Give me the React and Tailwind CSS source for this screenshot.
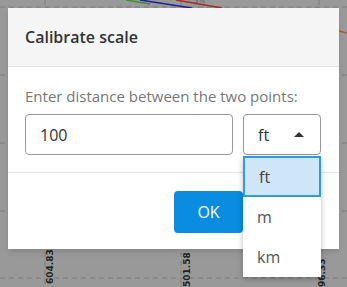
import React from 'react';

const FONT = { fontFamily: '"Open Sans", "Noto Sans", sans-serif' };

const ChartBackdrop = () => (
    <svg className="absolute inset-0" width="347" height="287" viewBox="0 0 347 287">
        {/* grid */}
        {[7, 75, 143, 211, 278].map((y) => (
            <line key={y} x1="0" y1={y} x2="347" y2={y} stroke="#7d7d7d" strokeWidth="1" strokeDasharray="5 4" />
        ))}
        {[45, 181, 319].map((x) => (
            <line key={x} x1={x} y1="0" x2={x} y2="287" stroke="#7d7d7d" strokeWidth="1" strokeDasharray="5 4" />
        ))}
        {/* series */}
        <path d="M126 0 L150 4" stroke="#3f8f3f" strokeWidth="1.5" fill="none" />
        <path d="M140 0 L192 8" stroke="#22229a" strokeWidth="1.5" fill="none" />
        <path d="M176 0 L222 8" stroke="#a82a2a" strokeWidth="1.5" fill="none" />
        <text x="194" y="3" fontSize="7" fill="#555" fontFamily="DejaVu Sans, sans-serif">3%</text>
        <path d="M339 31 L347 33" stroke="#b3562a" strokeWidth="1.5" fill="none" />
        {/* axis labels */}
        <text transform="translate(53 287) rotate(-90)" x="3" y="0" fontSize="9" fontWeight="bold" fill="#222" fontFamily="DejaVu Sans, sans-serif">604.83</text>
        <text transform="translate(190 290) rotate(-90)" x="3" y="0" fontSize="9" fontWeight="bold" fill="#222" fontFamily="DejaVu Sans, sans-serif">501.58</text>
        <text transform="translate(325 290) rotate(-90)" x="3" y="0" fontSize="9" fontWeight="bold" fill="#222" fontFamily="DejaVu Sans, sans-serif">96.33</text>
    </svg>
);

export default function App() {
    return (
        <div className="relative w-[347px] h-[287px] overflow-hidden bg-[#999999]" style={FONT}>
            <ChartBackdrop />

            {/* Dialog */}
            <div className="absolute left-[8px] top-[8px] w-[331px] bg-white shadow-md">
                <div className="h-[59px] flex items-center px-[17px] bg-[#f5f5f5] border-b border-[#e2e2e2]">
                    <h2 className="text-[16px] font-semibold text-[#333]">Calibrate scale</h2>
                </div>

                <div className="px-[17px] pt-[19px] pb-[17px] border-b border-[#e2e2e2]">
                    <p className="text-[15px] leading-[20px] text-[#777]">Enter distance between the two points:</p>
                    <div className="mt-[8px] flex gap-[10px]">
                        <div className="w-[208px] h-[41px] flex items-center px-[14px] border border-[#9a9a9a] rounded-[4px] text-[16px] text-[#333]">
                            100
                        </div>
                        <div className="w-[78px] h-[41px] flex items-center justify-between pl-[14px] pr-[16px] border border-[#9a9a9a] rounded-[4px] text-[16px] text-[#333]">
                            <span>ft</span>
                            <span className="w-0 h-0 border-l-[5px] border-r-[5px] border-b-[5px] border-l-transparent border-r-transparent border-b-[#333]" />
                        </div>
                    </div>
                </div>

                <div className="h-[76px] flex justify-end items-start pt-[18px] pr-[96px]">
                    <button className="w-[69px] h-[42px] rounded-[4px] bg-[#0a8ce0] text-white text-[16px]">OK</button>
                </div>
            </div>

            {/* Dropdown */}
            <div className="absolute left-[243px] top-[156px] w-[78px] bg-white shadow-[0_2px_6px_rgba(0,0,0,0.25)]">
                <div className="h-[41px] flex items-center px-[14px] bg-[#cfe6f8] border-2 border-[#2e9be3] text-[16px] text-[#444]">ft</div>
                <div className="h-[40px] flex items-center px-[14px] text-[16px] text-[#555]">m</div>
                <div className="h-[40px] flex items-center px-[14px] text-[16px] text-[#555]">km</div>
            </div>
        </div>
    );
}
